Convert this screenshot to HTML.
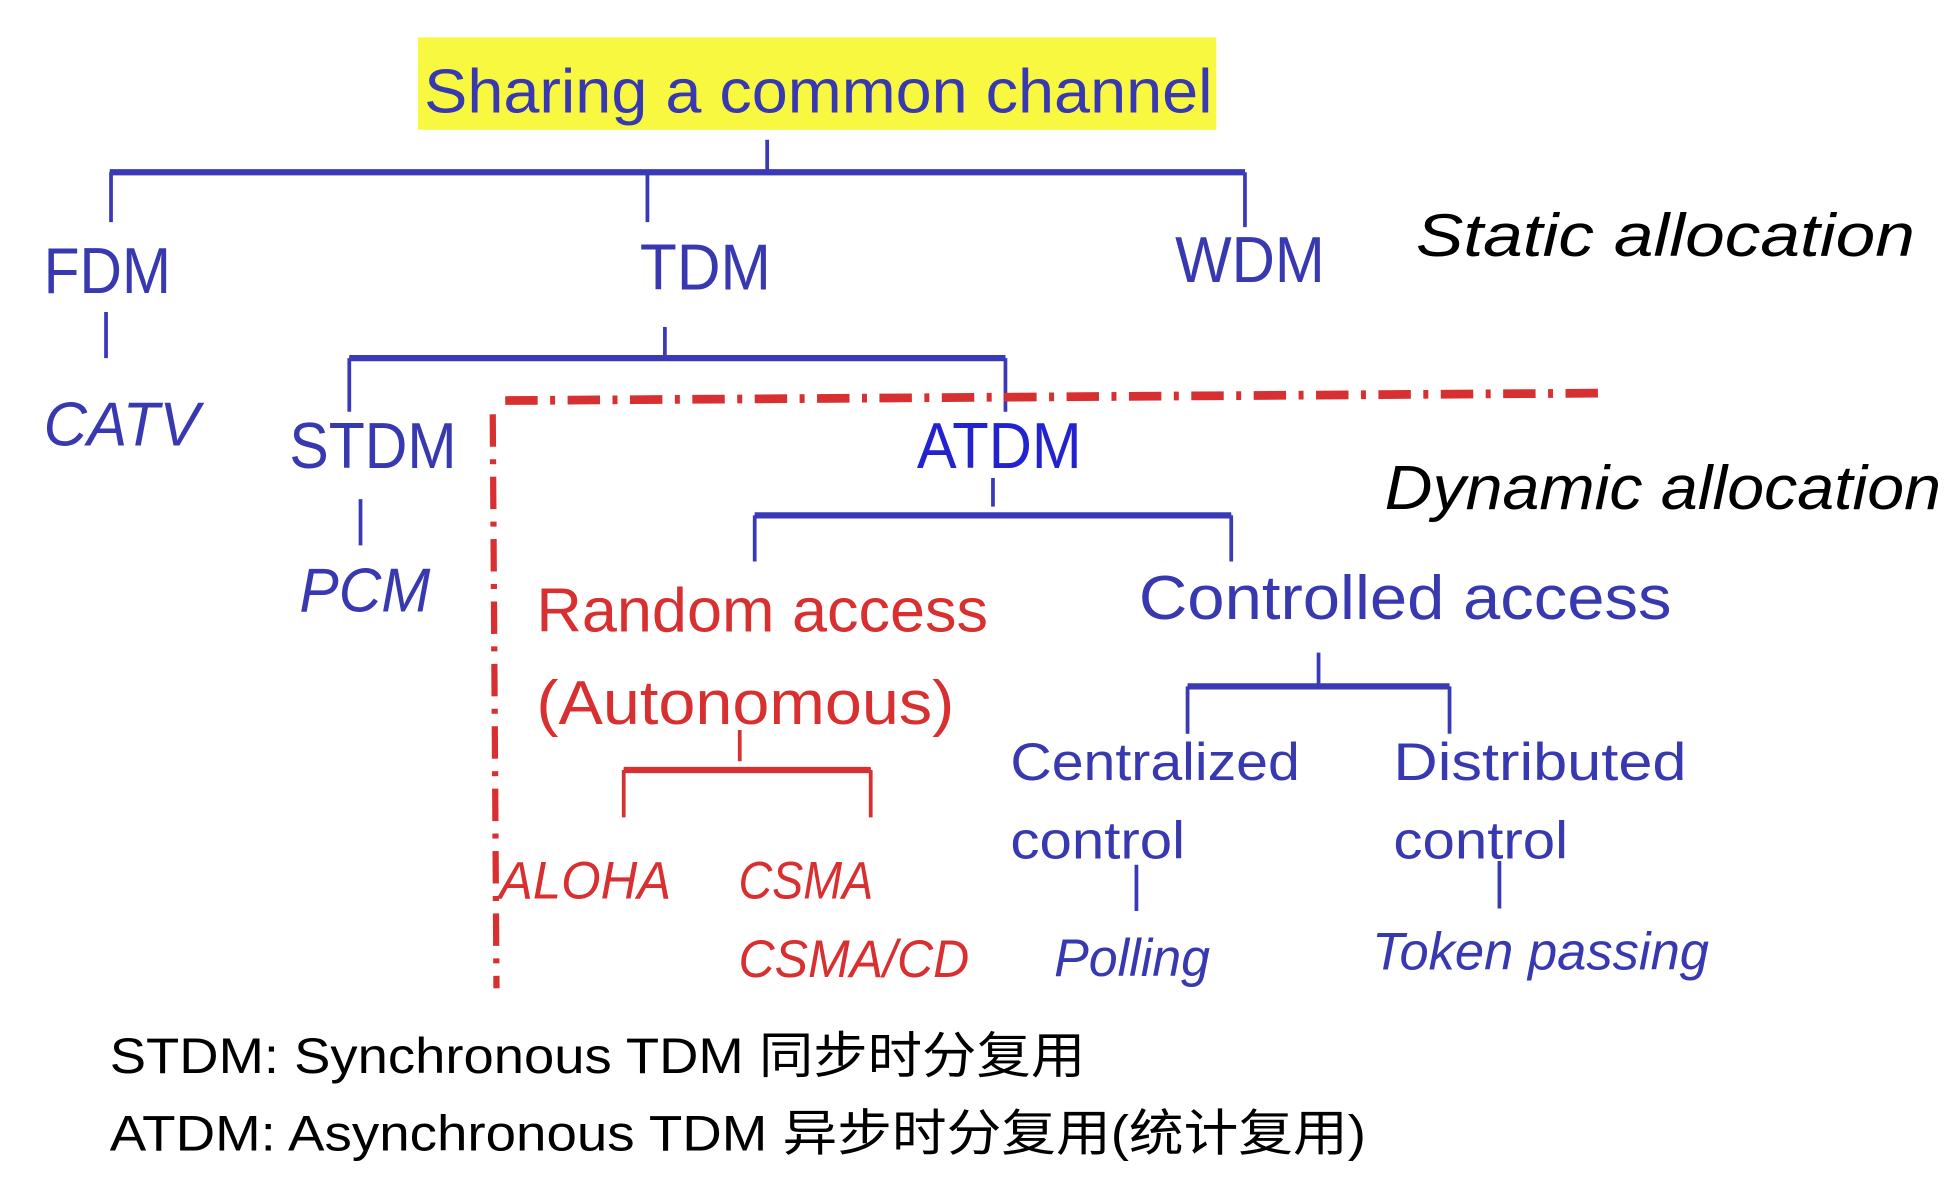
<!DOCTYPE html>
<html><head><meta charset="utf-8"><style>
html,body{margin:0;padding:0;background:#fff;width:1956px;height:1178px;overflow:hidden}
svg{display:block}
text{font-family:"Liberation Sans","Noto Sans CJK SC",sans-serif}
.b{fill:#3838b0}.r{fill:#d83030}.k{fill:#000}
.i{font-style:italic}
</style></head><body>
<svg width="1956" height="1178" viewBox="0 0 1568 944" preserveAspectRatio="none">
<rect x="335" y="30" width="640" height="74" fill="#f8f840"/>
<text x="340" y="90" font-size="50" class="b" textLength="632" lengthAdjust="spacingAndGlyphs">Sharing a common channel</text>
<g stroke="#3a3ab8" stroke-width="3" fill="none">
<path d="M615 112V137M88 138H998M89 138V178M519 138V178M998 138V182"/>
<path d="M85 250V287M533 262V287M280 287H806M280 287V330M806 287V330"/>
<path d="M289 400V437M796 383V406M605 413H987M605 413V450M987 413V450"/>
<path d="M1057 523V549M952 550H1162M952 550V588M1162 550V588"/>
<path d="M911 693V730M1202 690V728"/>
</g>
<path d="M88 138H998M280 287H806M605 413H987M952 550H1162" stroke="#3a3ab8" stroke-width="5"/>
<g stroke="#d83030" stroke-width="3" fill="none"><path d="M593 585V610M500 617H698M500 617V655M698 617V655"/></g>
<path d="M500 617H698" stroke="#d83030" stroke-width="5"/>
<path d="M405 321L1290 315" stroke="#d83030" stroke-width="7" stroke-dasharray="26 10 4 10"/>
<path d="M395 332L398 792" stroke="#d83030" stroke-width="5" stroke-dasharray="26 10 4 10"/>
<text x="35" y="235" font-size="52" class="b" textLength="102" lengthAdjust="spacingAndGlyphs">FDM</text>
<text x="513" y="232" font-size="52" class="b" textLength="105" lengthAdjust="spacingAndGlyphs">TDM</text>
<text x="942" y="226" font-size="52" class="b" textLength="120" lengthAdjust="spacingAndGlyphs">WDM</text>
<text x="1135" y="205" font-size="48" class="k i" textLength="400" lengthAdjust="spacingAndGlyphs">Static allocation</text>
<text x="35" y="357" font-size="50" class="b i" textLength="125" lengthAdjust="spacingAndGlyphs">CATV</text>
<text x="232" y="375" font-size="52" class="b" textLength="134" lengthAdjust="spacingAndGlyphs">STDM</text>
<text x="735" y="375" font-size="52" fill="#2222d0" textLength="132" lengthAdjust="spacingAndGlyphs">ATDM</text>
<text x="1110" y="408" font-size="50" class="k i" textLength="446" lengthAdjust="spacingAndGlyphs">Dynamic allocation</text>
<text x="240" y="490" font-size="50" class="b i" textLength="105" lengthAdjust="spacingAndGlyphs">PCM</text>
<text x="430" y="506" font-size="50" class="r" textLength="362" lengthAdjust="spacingAndGlyphs">Random access</text>
<text x="430" y="580" font-size="50" class="r" textLength="335" lengthAdjust="spacingAndGlyphs">(Autonomous)</text>
<text x="913" y="496" font-size="50" class="b" textLength="427" lengthAdjust="spacingAndGlyphs">Controlled access</text>
<text x="810" y="625" font-size="42" class="b" textLength="232" lengthAdjust="spacingAndGlyphs">Centralized</text>
<text x="810" y="688" font-size="42" class="b" textLength="140" lengthAdjust="spacingAndGlyphs">control</text>
<text x="1117" y="625" font-size="42" class="b" textLength="235" lengthAdjust="spacingAndGlyphs">Distributed</text>
<text x="1117" y="688" font-size="42" class="b" textLength="140" lengthAdjust="spacingAndGlyphs">control</text>
<text x="400" y="720" font-size="42" class="r i" textLength="138" lengthAdjust="spacingAndGlyphs">ALOHA</text>
<text x="592" y="720" font-size="42" class="r i" textLength="108" lengthAdjust="spacingAndGlyphs">CSMA</text>
<text x="592" y="783" font-size="42" class="r i" textLength="185" lengthAdjust="spacingAndGlyphs">CSMA/CD</text>
<text x="845" y="782" font-size="42" class="b i" textLength="125" lengthAdjust="spacingAndGlyphs">Polling</text>
<text x="1100" y="777" font-size="42" class="b i" textLength="270" lengthAdjust="spacingAndGlyphs">Token passing</text>
<text x="88" y="860" font-size="40" class="k" textLength="782" lengthAdjust="spacingAndGlyphs">STDM: Synchronous TDM 同步时分复用</text>
<text x="88" y="922" font-size="40" class="k" textLength="1007" lengthAdjust="spacingAndGlyphs">ATDM: Asynchronous TDM 异步时分复用(统计复用)</text>
</svg>
</body></html>
